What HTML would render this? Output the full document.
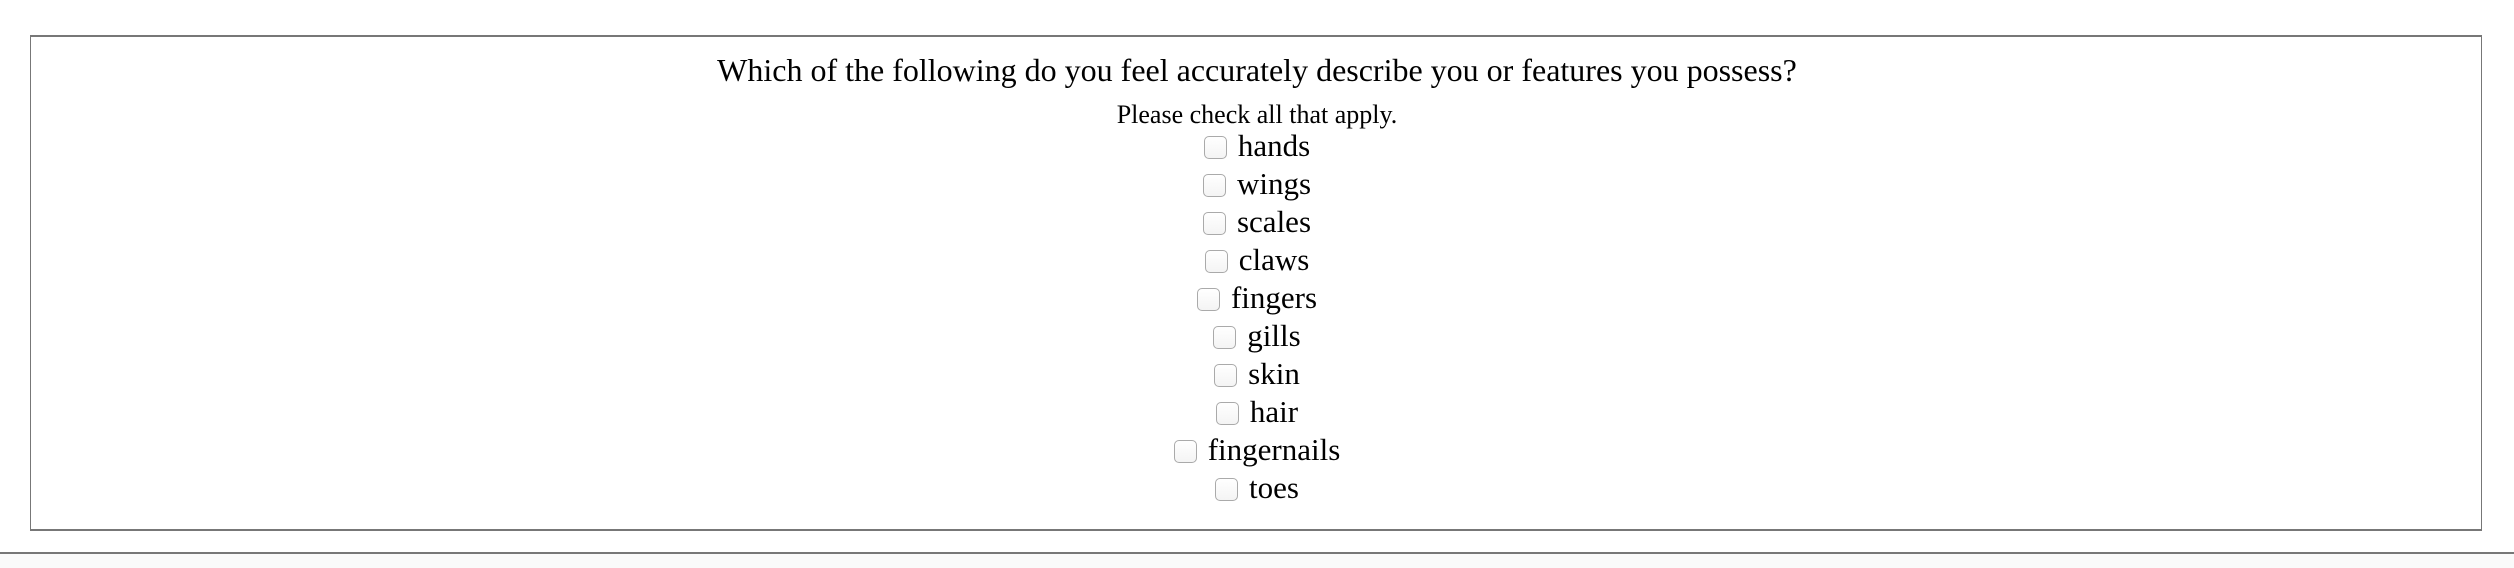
<!DOCTYPE html>
<html><head><style>
html,body{margin:0;padding:0;width:2514px;height:566px;background:#fff;overflow:hidden;font-family:"Liberation Serif",serif;color:#000}
.box{position:absolute;left:30px;top:35px;width:2450px;height:492px;border:2px solid #777;border-left-width:1px;border-right-width:1px;border-top-width:2px}
.bottom{position:absolute;left:0;top:552px;width:2514px;height:14px;background:#fafafa;border-top:2px solid #777}
.t{position:absolute;left:0;width:2514px;text-align:center;white-space:nowrap}
.title{font-size:32px;top:51px;line-height:38px}
.sub{font-size:26px;top:100px;line-height:30px}
.item{font-size:31px;line-height:38px;height:38px}
.cb{display:inline-block;width:21px;height:21px;border:1px solid #aaa;border-radius:5px;vertical-align:-3px;margin-right:11px;background:linear-gradient(#fff,#f4f4f4)}
</style></head><body>
<div class="box"></div>
<div class="bottom"></div>
<div class="t title">Which of the following do you feel accurately describe you or features you possess?</div>
<div class="t sub">Please check all that apply.</div>
<div class="t item" style="top:127px"><span class="cb"></span>hands</div>
<div class="t item" style="top:165px"><span class="cb"></span>wings</div>
<div class="t item" style="top:203px"><span class="cb"></span>scales</div>
<div class="t item" style="top:241px"><span class="cb"></span>claws</div>
<div class="t item" style="top:279px"><span class="cb"></span>fingers</div>
<div class="t item" style="top:317px"><span class="cb"></span>gills</div>
<div class="t item" style="top:355px"><span class="cb"></span>skin</div>
<div class="t item" style="top:393px"><span class="cb"></span>hair</div>
<div class="t item" style="top:431px"><span class="cb"></span>fingernails</div>
<div class="t item" style="top:469px"><span class="cb"></span>toes</div>
</body></html>
